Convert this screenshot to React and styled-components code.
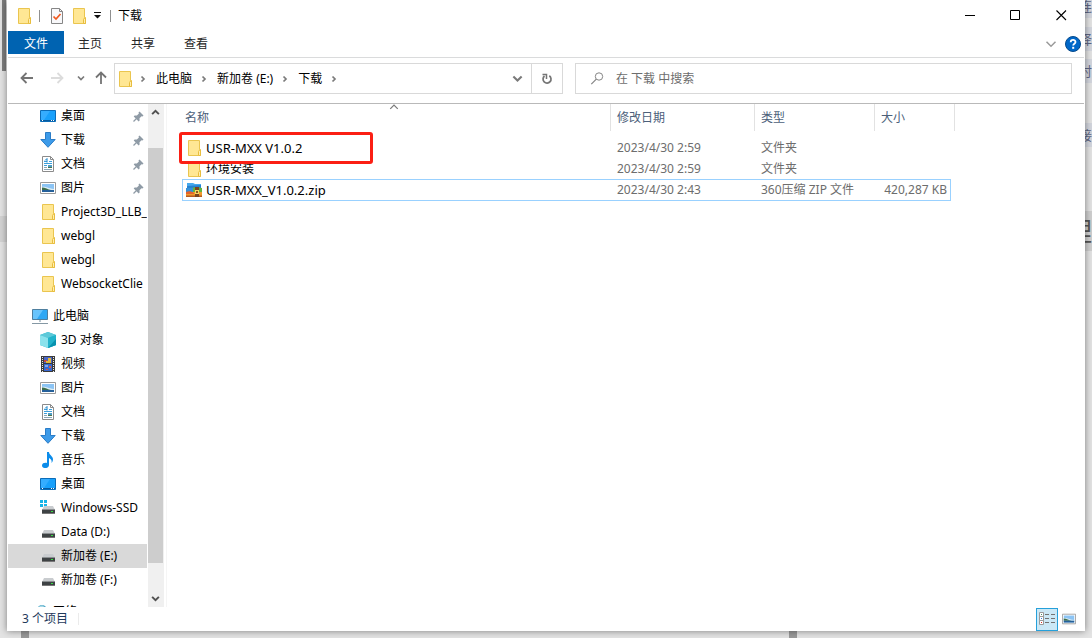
import React from "react";
import styled, { createGlobalStyle } from "styled-components";

const GlobalStyle = createGlobalStyle`
  *, *::before, *::after { box-sizing: border-box; }
  body {
    margin: 0;
    background: #dfdfdf;
    color: #000;
    font-family: "Noto Sans", "Noto Sans CJK SC", sans-serif;
    font-size: 12px;
    line-height: 16px;
  }
  button, input { font: inherit; color: inherit; }
`;

/* ---------- desktop behind the window ---------- */

const Desktop = styled.div`
  position: relative;
  display: flex;
  height: 100vh;
  padding: 0 7px 7px;
  overflow: hidden;
  background: #e3e3e3;
`;

const BackBar = styled.div`
  position: absolute;
  left: ${(p) => p.$left};
  top: ${(p) => p.$top};
  width: ${(p) => p.$w}px;
  height: ${(p) => p.$h}px;
  background: ${(p) => p.$color};
`;

const BackText = styled.div`
  position: absolute;
  right: 0;
  top: ${(p) => p.$top}px;
  width: 8px;
  height: ${(p) => p.$h}px;
  display: flex;
  align-items: center;
  justify-content: flex-end;
  overflow: hidden;
  background: ${(p) => p.$bg};
  color: ${(p) => p.$color};
  font-size: ${(p) => p.$size}px;
  line-height: ${(p) => p.$h}px;
`;

const Window = styled.main`
  position: relative;
  flex: 1;
  min-width: 0;
  display: flex;
  flex-direction: column;
  padding: 0 1px;
  background: #fff;
  box-shadow: 0 0 7px rgba(0, 0, 0, 0.45);
`;

/* ---------- shared ---------- */

const IconButton = styled.button`
  display: flex;
  align-items: center;
  justify-content: center;
  flex: none;
  width: ${(p) => p.$w}px;
  height: ${(p) => p.$h || 30}px;
  padding: 0;
  border: 0;
  background: none;
  color: ${(p) => p.$color || "#000"};
`;

const Svg = styled.svg`
  display: block;
  flex: none;
`;

/* ---------- title bar ---------- */

const TitleBar = styled.header`
  display: flex;
  align-items: center;
  height: 31px;
  padding-left: 10px;
`;

const QuickTools = styled.div`
  display: flex;
  align-items: center;
  gap: 7px;
`;

const Divider = styled.span`
  width: 1px;
  height: 12px;
  margin-left: 1px;
  background: #909090;
`;

const Title = styled.h1`
  margin: 0 0 0 7px;
  font-size: 12px;
  font-weight: 400;
`;

const WindowControls = styled.div`
  display: flex;
  margin-left: auto;
`;

/* ---------- ribbon ---------- */

const Ribbon = styled.nav`
  display: flex;
  align-items: flex-start;
  gap: 1px;
  height: 27px;
  border-bottom: 1px solid #dadbdc;
`;

const Tab = styled.button`
  height: 23px;
  padding: 2px ${(p) => (p.$active ? 16 : 14)}px 0;
  margin-right: ${(p) => (p.$active ? -1 : 0)}px;
  border: 0;
  background: ${(p) => (p.$active ? "#0063b1" : "transparent")};
  color: ${(p) => (p.$active ? "#fff" : "#262626")};
`;

const RibbonTools = styled.div`
  display: flex;
  align-items: center;
  margin-left: auto;
  height: 26px;
`;

/* ---------- address row ---------- */

const AddressRow = styled.div`
  display: flex;
  align-items: flex-start;
  height: 46px;
  padding: 5px 12px 0 6px;
  border-bottom: 1px solid #b9b9b9;
`;

const AddressFields = styled.div`
  flex: 1;
  min-width: 0;
  display: grid;
  grid-template-columns: minmax(0, 449fr) minmax(0, 497fr);
  gap: 12px;
`;

const AddressBox = styled.div`
  display: flex;
  align-items: center;
  height: 31px;
  padding-left: 4px;
  border: 1px solid #d9d9d9;
`;

const Crumbs = styled.ol`
  display: flex;
  align-items: center;
  flex: 1;
  min-width: 0;
  margin: 0;
  padding: 0 0 0 7px;
  list-style: none;
`;

const Crumb = styled.li`
  display: flex;
  align-items: center;
  gap: 8px;
  margin-right: 9px;
  white-space: nowrap;
`;

const CrumbLink = styled.a`
  color: #000;
  text-decoration: none;
`;

const RefreshCell = styled.div`
  border-left: 1px solid #d9d9d9;
`;

const SearchBox = styled.label`
  display: flex;
  align-items: center;
  gap: 12px;
  height: 31px;
  padding: 0 14px;
  border: 1px solid #d9d9d9;
`;

const SearchInput = styled.input`
  flex: 1;
  min-width: 0;
  padding: 0;
  border: 0;
  outline: 0;
  background: none;
  &::placeholder { color: #6d6d6d; opacity: 1; }
`;

/* ---------- body ---------- */

const Body = styled.div`
  flex: 1;
  min-height: 0;
  display: flex;
`;

const Sidebar = styled.nav`
  flex: none;
  width: 139px;
  overflow: hidden;
`;

const Tree = styled.ul`
  margin: 0 0 8px;
  padding: 0;
  list-style: none;
`;

const TreeLink = styled.a`
  display: flex;
  align-items: center;
  gap: 5px;
  height: 24px;
  padding-left: ${(p) => (p.$root ? 24 : 32)}px;
  background: ${(p) => (p.$selected ? "#d9d9d9" : "transparent")};
  color: #000;
  text-decoration: none;
  white-space: nowrap;
`;

const PinSlot = styled.span`
  margin-left: auto;
  padding-right: 3px;
`;

const ScrollRail = styled.div`
  flex: none;
  width: 16px;
  margin-left: 1px;
  display: flex;
  flex-direction: column;
  background: #f0f0f0;
`;

const ScrollTrack = styled.div`
  flex: 1;
  display: flex;
  flex-direction: column;
  padding-right: 1px;
`;

const Spacer = styled.div`
  flex: 27;
`;

const Thumb = styled.div`
  flex: 415;
  background: #cdcdcd;
`;

const Files = styled.section`
  flex: 1;
  min-width: 0;
  margin-left: 2px;
  padding-left: 15px;
  border-left: 1px solid #f5f5f5;
`;

const Table = styled.table`
  width: 773px;
  table-layout: fixed;
  border-collapse: separate;
  border-spacing: 0;
`;

const HeadCell = styled.th`
  position: relative;
  height: 27px;
  padding: 0 0 0 ${(p) => (p.$first ? 3 : 6)}px;
  border-right: 1px solid #e2e2e2;
  color: #4c607a;
  font-weight: 400;
  text-align: left;
`;

const SortMark = styled.span`
  position: absolute;
  top: -2px;
  left: 50%;
  margin-left: -7px;
`;

const HeadGap = styled.tr`
  height: 6px;
`;

const FileRow = styled.tr`
  position: relative;
  height: 21px;
  &::after {
    content: "";
    position: absolute;
    inset: 0 4px -1px 0;
    border: 1px solid #99d1ff;
    display: ${(p) => (p.$focused ? "block" : "none")};
  }
`;

const Cell = styled.td`
  position: relative;
  padding: 0 8px 0 6px;
  color: #6d6d6d;
  text-align: ${(p) => p.$align || "left"};
  white-space: nowrap;
`;

const NameCell = styled(Cell)`
  padding: 0 0 0 4px;
  color: #000;
`;

const FileName = styled.span`
  display: flex;
  align-items: center;
  gap: 4px;
  height: 20px;
  font-size: ${(p) => (p.$latin ? 13 : 12)}px;
`;

const IconSlot = styled.span`
  display: flex;
  justify-content: center;
  flex: none;
  width: 16px;
`;

const Highlight = styled.span`
  position: absolute;
  z-index: 2;
  top: -5px;
  left: -3px;
  width: 194px;
  height: 32px;
  border: 3px solid #fb1f14;
  border-radius: 3px;
`;

const StatusBar = styled.footer`
  display: flex;
  align-items: center;
  height: 24px;
  padding: 0 4px 0 14px;
  color: #1e395b;
`;

const StatusDivider = styled.span`
  width: 1px;
  height: 12px;
  margin-left: 10px;
  background: #ebebeb;
`;

const Views = styled.div`
  display: flex;
  align-items: center;
  margin-left: auto;
`;

const ViewButton = styled.button`
  display: flex;
  align-items: center;
  justify-content: center;
  width: 22px;
  height: 23px;
  padding: 0;
  border: 1px solid ${(p) => (p.$on ? "#26a0da" : "transparent")};
  background: ${(p) => (p.$on ? "#cbe8f6" : "transparent")};
`;

/* ---------- icons ---------- */

const FolderIcon = () => (
  <Svg width="13" height="16" viewBox="0 0 13 16" aria-hidden="true">
    <path d="M.5.5h11v9h1v6H.5z" fill="#ffe794" stroke="#eac54f" />
    <path d="M10.5 15.5v-4l1-1.5h1v5.5z" fill="#ffeeb0" stroke="#e8bd3e" />
  </Svg>
);

const CheckDocIcon = () => (
  <Svg width="12" height="16" viewBox="0 0 12 16" aria-hidden="true">
    <path d="M.5.5h8l3 3v12H.5z" fill="#f8f8fa" stroke="#868686" />
    <path d="M8.500.5v3h3" fill="none" stroke="#868686" />
    <path d="M2.500 8.500l2.500 2.500 4.500-5" fill="none" stroke="#f0581e" strokeWidth="1.700" />
  </Svg>
);

const MenuMark = () => (
  <Svg width="7" height="7" viewBox="0 0 7 7" aria-hidden="true">
    <path d="M0 0h7v1H0zM0 3h7L3.500 6.500z" fill="#111" />
  </Svg>
);

const Chevron = ({ dir = "down", size = 8, color = "#7a7a7a", width = 1.7 }) => {
  const d = { down: "M1 2.500l3 3 3-3", up: "M1 5.500l3-3 3 3", right: "M2.500 1.500L5 4 2.500 6.500" }[dir];
  return (
    <Svg width={size} height={size} viewBox="0 0 8 8" aria-hidden="true">
      <path d={d} fill="none" stroke={color} strokeWidth={width} />
    </Svg>
  );
};

const Arrow = ({ turn = 0, color = "#747474" }) => (
  <Svg width="14" height="14" viewBox="0 0 14 14" aria-hidden="true">
    <path d="M13 7H2M6.500 2L1.500 7l5 5" fill="none" stroke={color} strokeWidth="1.800" transform={`rotate(${turn} 7 7)`} />
  </Svg>
);

const RefreshIcon = () => (
  <Svg width="12" height="12" viewBox="0 0 12 12" aria-hidden="true">
    <path d="M8.300 2.800A4 4 0 1 1 3.500 3" fill="none" stroke="#757575" strokeWidth="1.700" />
    <path d="M1.500 1.500h4v4.500" fill="none" stroke="#757575" strokeWidth="1.500" />
  </Svg>
);

const SearchIcon = () => (
  <Svg width="14" height="14" viewBox="0 0 14 14" aria-hidden="true">
    <circle cx="9" cy="4.500" r="3.700" fill="none" stroke="#858585" />
    <path d="M6.300 7.200L1.300 12.200" stroke="#858585" strokeWidth="1.200" />
  </Svg>
);

const HelpIcon = () => (
  <Svg width="16" height="16" viewBox="0 0 16 16" aria-hidden="true">
    <circle cx="8" cy="8" r="7.500" fill="#0067c8" stroke="#064a8c" />
    <path d="M5.700 6.200c0-3 4.800-3 4.800-.2 0 1.700-2.300 1.700-2.300 3.500" fill="none" stroke="#fff" strokeWidth="1.800" />
    <rect x="7.200" y="10.800" width="2" height="2" fill="#fff" />
  </Svg>
);

const MinIcon = () => (
  <Svg width="11" height="11" viewBox="0 0 11 11"><path d="M0 5.500h10" stroke="#000" /></Svg>
);
const MaxIcon = () => (
  <Svg width="11" height="11" viewBox="0 0 11 11"><path d="M.5.5h9v9h-9z" fill="none" stroke="#000" /></Svg>
);
const CloseIcon = () => (
  <Svg width="11" height="11" viewBox="0 0 11 11"><path d="M.5.5l9.500 9.500M10 .5L.5 10" stroke="#000" strokeWidth="1.100" /></Svg>
);

const DesktopIcon = () => (
  <Svg width="16" height="16" viewBox="0 0 16 16">
    <path d="M.5 2.500h15v11H.5z" fill="#18a0fb" stroke="#0b6cb8" />
    <path d="M1 12h14v1H1z" fill="#075a9e" />
    <path d="M2 12h1v1H2zM11 12h1v1h-1zM13 12h1v1h-1z" fill="#fff" />
    <path d="M1 3h9L4 12H1z" fill="#35adff" />
  </Svg>
);

const DownloadIcon = () => (
  <Svg width="16" height="16" viewBox="0 0 16 16">
    <path d="M5.500.5h5v7h4.700L8 15.300.8 7.500h4.700z" fill="#3d9be9" stroke="#2a7cc7" />
  </Svg>
);

const DocIcon = () => (
  <Svg width="16" height="16" viewBox="0 0 16 16">
    <path d="M2.500.5h8l3 3v12h-11z" fill="#fff" stroke="#8b8b8b" />
    <path d="M10.500.5v3h3" fill="none" stroke="#8b8b8b" />
    <path d="M4 5.500h3M9 5.500h3M4 7.500h8M4 9.500h3" stroke="#3b9fdb" />
    <path d="M5 4.500l2-2v4" fill="none" stroke="#1683c9" />
    <path d="M8 9h4v2H8z" fill="#4e9cc4" />
    <path d="M4 11.500h3M4 13.500h8" stroke="#8ba7b8" />
    <path d="M8 11h4v1H8z" fill="#48724a" />
  </Svg>
);

const PictureIcon = ({ w = 16, h = 16 }) => (
  <Svg width={w} height={h} viewBox="0 0 16 16">
    <path d="M.5 2.500h15v11H.5z" fill="#fff" stroke="#9a9a9a" />
    <path d="M2 4h12v8H2z" fill="#8cc4f4" />
    <path d="M2 7c3-1 5 1 12 2v1H2z" fill="#dcecf5" />
    <path d="M2 7.500c3 0 6 2 9 2.500H2z" fill="#3c6d4c" />
    <path d="M2 10h12v2H2z" fill="#25609a" />
  </Svg>
);

const ComputerIcon = () => (
  <Svg width="16" height="16" viewBox="0 0 16 16">
    <path d="M.5 1.500h15v10H.5z" fill="#2fa8f5" stroke="#4f7f9f" />
    <path d="M1 2h10L5 11H1z" fill="#68c4fc" />
    <path d="M7 12h2v2H7z" fill="#b8c6ce" />
    <path d="M0 15.500h16" stroke="#8598a4" />
  </Svg>
);

const CubeIcon = () => (
  <Svg width="16" height="16" viewBox="0 0 16 16">
    <path d="M8 0l8 3v10l-8 3-8-3V3z" fill="#29b7cf" />
    <path d="M8 0l8 3-8 3-8-3z" fill="#5cc9d8" />
    <path d="M8 6l8-3v10l-8 3z" fill="#22b3cb" />
    <path d="M0 3l8 3v10l-8-3z" fill="#8be2ec" />
    <path d="M16 7v6l-8 3z" fill="#0892ae" />
  </Svg>
);

const VideoIcon = () => (
  <Svg width="16" height="16" viewBox="0 0 16 16">
    <path d="M1 0h14v16H1z" fill="#3b3b3b" />
    <path d="M2.500 1v15M13.500 1v15" stroke="#e9e9e9" strokeWidth="1" strokeDasharray="1 1" />
    <path d="M4 1h8v6H4z" fill="#4a67c8" />
    <path d="M4 8h8v7H4z" fill="#3869d0" />
    <path d="M4 4h3v2H4z" fill="#c24444" />
    <path d="M8 2h3v3H8zM6 5h5v2H6z" fill="#e4b93b" />
    <path d="M5 9h3v2H5z" fill="#82a6eb" />
    <path d="M6 13h2v1H6zM9 10h2v2H9z" fill="#d95b3a" />
  </Svg>
);

const MusicIcon = () => (
  <Svg width="16" height="16" viewBox="0 0 16 16">
    <path d="M7 0h2c0 3 4 4 4 7.500 0 1.500-1 3-1.500 3.500C12 8 11 7 9 6v7c0 4-7 4-7 .5C2 11 5 10.500 7 11z" fill="#0c8cea" />
  </Svg>
);

const DriveIcon = ({ windows }) => (
  <Svg width="16" height="16" viewBox="0 0 16 16">
    {windows && <path d="M0 0h3v3H0zM4 0h3v3H4zM0 4h3v3H0zM4 4h3v3H4z" fill="#16b4e8" />}
    <path d="M4 6h9l2 4H2z" fill="#c9cccf" />
    <path d="M2 9h13v5H2z" fill="#3e4244" />
    <path d="M2 9h13v1H2z" fill="#8b8f91" />
    <path d="M2 13.500h13" stroke="#777" />
    <path d="M11 11h2v1h-2z" fill="#37e043" />
  </Svg>
);

const NetworkIcon = () => (
  <Svg width="16" height="16" viewBox="0 0 16 16">
    <circle cx="10" cy="6" r="5" fill="#55aac9" />
    <path d="M6 4c2-3 5-3 6-2l-2 3z" fill="#a8d8e6" />
    <path d="M1 7h9v6H1z" fill="#2f9be0" />
  </Svg>
);

const PinIcon = () => (
  <Svg width="11" height="11" viewBox="0 0 11 11" aria-hidden="true">
    <path d="M6.500.5l4 4-1 1-1-.3-2 2 .1 2.300-.9.9-5-5 .9-.9 2.300.1 2-2-.4-1.100z" fill="#8f9ba6" />
    <path d="M3.500 7.500L.5 10.500" stroke="#8f9ba6" strokeWidth="1.300" />
  </Svg>
);

const ArchiveIcon = () => (
  <Svg width="16" height="14" viewBox="0 0 16 14">
    <path d="M1 0h6l2 1h6v5H1z" fill="#45a8ed" />
    <path d="M1 3l14-1v4H1z" fill="#2680d0" />
    <path d="M0 6c5-1 10-3 16-1v4H0z" fill="#63b440" />
    <path d="M0 5h7v4H0z" fill="#3490d8" />
    <path d="M0 9h16v4H0z" fill="#f19a2c" />
    <path d="M0 9c3-1 5-1 8 1v1H0z" fill="#e4632d" />
    <path d="M0 12.500h16V14H0z" fill="#b65a20" />
    <path d="M9 4h4v10H9z" fill="#7a4520" />
    <path d="M9 7h4v4H9z" fill="#f6d564" />
    <path d="M10 8h2v2h-2z" fill="#8a5521" />
  </Svg>
);

const DetailsIcon = () => (
  <Svg width="16" height="14" viewBox="0 0 16 14">
    <path d="M.5.5h4v4h-4zM.5 4.500h4v4h-4zM.5 8.500h4v4h-4z" fill="#fff" stroke="#9a9a9a" />
    <path d="M2 2h1v1H2z" fill="#4a8f68" />
    <path d="M2 6h1v1H2z" fill="#2f7fe0" />
    <path d="M2 10h1v1H2z" fill="#d92c1d" />
    <path d="M6 2.500h4M12 2.500h4M6 6.500h4M12 6.500h4M6 10.500h4M12 10.500h4" stroke="#737373" />
  </Svg>
);

/* ---------- data ---------- */

const quickAccess = [
  { label: "桌面", icon: DesktopIcon, pinned: true },
  { label: "下载", icon: DownloadIcon, pinned: true },
  { label: "文档", icon: DocIcon, pinned: true },
  { label: "图片", icon: PictureIcon, pinned: true },
  { label: "Project3D_LLB_", icon: FolderIcon },
  { label: "webgl", icon: FolderIcon },
  { label: "webgl", icon: FolderIcon },
  { label: "WebsocketClie", icon: FolderIcon },
];

const thisPc = [
  { label: "此电脑", icon: ComputerIcon, root: true },
  { label: "3D 对象", icon: CubeIcon },
  { label: "视频", icon: VideoIcon },
  { label: "图片", icon: PictureIcon },
  { label: "文档", icon: DocIcon },
  { label: "下载", icon: DownloadIcon },
  { label: "音乐", icon: MusicIcon },
  { label: "桌面", icon: DesktopIcon },
  { label: "Windows-SSD", icon: () => <DriveIcon windows /> },
  { label: "Data (D:)", icon: DriveIcon },
  { label: "新加卷 (E:)", icon: DriveIcon, selected: true },
  { label: "新加卷 (F:)", icon: DriveIcon },
];

const network = [{ label: "网络", icon: NetworkIcon, root: true }];

const files = [
  { name: "USR-MXX V1.0.2", latin: true, date: "2023/4/30 2:59", type: "文件夹", size: "", icon: FolderIcon, marked: true },
  { name: "环境安装", date: "2023/4/30 2:59", type: "文件夹", size: "", icon: FolderIcon },
  { name: "USR-MXX_V1.0.2.zip", latin: true, date: "2023/4/30 2:43", type: "360压缩 ZIP 文件", size: "420,287 KB", icon: ArchiveIcon, focused: true },
];

const TreeGroup = ({ items }) => (
  <Tree>
    {items.map(({ label, icon: Icon, pinned, root, selected }, i) => (
      <li key={i}>
        <TreeLink href="#" $root={root} $selected={selected}>
          <IconSlot><Icon /></IconSlot>
          <span>{label}</span>
          {pinned && <PinSlot><PinIcon /></PinSlot>}
        </TreeLink>
      </li>
    ))}
  </Tree>
);

export default function App() {
  return (
    <Desktop>
      <GlobalStyle />
      <BackBar $left="2px" $top="0" $w={4} $h={71} $color="#7d7d7d" />
      <BackBar $left="0" $top="216px" $w={7} $h={26} $color="#d3d3d3" />
      <BackBar $left="21px" $top="calc(100% - 7px)" $w={8} $h={7} $color="#999" />
      <BackBar $left="789px" $top="calc(100% - 7px)" $w={8} $h={7} $color="#999" />
      <BackText $top={-6} $h={24} $bg="#d3d6de" $color="#5f6684" $size={13}>连</BackText>
      <BackText $top={27} $h={24} $bg="#d3d6de" $color="#5f6684" $size={13}>择</BackText>
      <BackText $top={59} $h={24} $bg="#d3d6de" $color="#5f6684" $size={13}>时</BackText>
      <BackText $top={123} $h={24} $bg="#d3d6de" $color="#5f6684" $size={13}>接</BackText>
      <BackText $top={211} $h={40} $bg="#cfcfcf" $color="#555" $size={26}>理</BackText>

      <Window>
        <TitleBar>
          <QuickTools>
            <FolderIcon />
            <Divider />
            <IconButton $w={19} aria-label="属性"><CheckDocIcon /></IconButton>
            <IconButton $w={13} aria-label="新建文件夹"><FolderIcon /></IconButton>
            <IconButton $w={9} aria-label="自定义快速访问工具栏"><MenuMark /></IconButton>
            <Divider />
          </QuickTools>
          <Title>下载</Title>
          <WindowControls>
            <IconButton $w={46} aria-label="最小化"><MinIcon /></IconButton>
            <IconButton $w={45} aria-label="最大化"><MaxIcon /></IconButton>
            <IconButton $w={46} aria-label="关闭"><CloseIcon /></IconButton>
          </WindowControls>
        </TitleBar>

        <Ribbon>
          <Tab $active>文件</Tab>
          <Tab>主页</Tab>
          <Tab>共享</Tab>
          <Tab>查看</Tab>
          <RibbonTools>
            <IconButton $w={22} $h={24} aria-label="展开功能区"><Chevron size={12} color="#9a9a9a" width={1} /></IconButton>
            <IconButton $w={22} $h={24} aria-label="帮助"><HelpIcon /></IconButton>
          </RibbonTools>
        </Ribbon>

        <AddressRow>
          <IconButton $w={26} aria-label="返回"><Arrow /></IconButton>
          <IconButton $w={34} aria-label="前进"><Arrow turn={180} color="#dcdcdc" /></IconButton>
          <IconButton $w={14} aria-label="最近浏览的位置"><Chevron /></IconButton>
          <IconButton $w={26} aria-label="上移"><Arrow turn={90} /></IconButton>
          <AddressFields>
            <AddressBox>
              <FolderIcon />
              <Crumbs>
                <Crumb><Chevron dir="right" /></Crumb>
                {["此电脑", "新加卷 (E:)", "下载"].map((c) => (
                  <Crumb key={c}><CrumbLink href="#">{c}</CrumbLink><Chevron dir="right" /></Crumb>
                ))}
              </Crumbs>
              <IconButton $w={28} $h={29} aria-label="以前的位置"><Chevron size={11} width={1.5} /></IconButton>
              <RefreshCell>
                <IconButton $w={30} $h={29} aria-label="刷新"><RefreshIcon /></IconButton>
              </RefreshCell>
            </AddressBox>
            <SearchBox>
              <SearchIcon />
              <SearchInput type="text" aria-label="搜索" placeholder="在 下载 中搜索" />
            </SearchBox>
          </AddressFields>
        </AddressRow>

        <Body>
          <Sidebar>
            <TreeGroup items={quickAccess} />
            <TreeGroup items={thisPc} />
            <TreeGroup items={network} />
          </Sidebar>
          <ScrollRail>
            <IconButton $w={15} $h={17} aria-label="向上滚动"><Chevron dir="up" size={9} color="#505050" /></IconButton>
            <ScrollTrack><Spacer /><Thumb /><Spacer /></ScrollTrack>
            <IconButton $w={15} $h={17} aria-label="向下滚动"><Chevron size={9} color="#505050" /></IconButton>
          </ScrollRail>
          <Files>
            <Table>
              <colgroup>
                <col width="429" /><col width="144" /><col width="120" /><col width="80" />
              </colgroup>
              <thead>
                <tr>
                  <HeadCell $first>
                    名称
                    <SortMark><Chevron dir="up" size={10} width={1} /></SortMark>
                  </HeadCell>
                  <HeadCell>修改日期</HeadCell>
                  <HeadCell>类型</HeadCell>
                  <HeadCell>大小</HeadCell>
                </tr>
              </thead>
              <tbody>
                <HeadGap />
                {files.map(({ icon: Icon, ...f }) => (
                  <FileRow key={f.name} $focused={f.focused}>
                    <NameCell>
                      <FileName $latin={f.latin}><IconSlot><Icon /></IconSlot>{f.name}</FileName>
                      {f.marked && <Highlight />}
                    </NameCell>
                    <Cell>{f.date}</Cell>
                    <Cell>{f.type}</Cell>
                    <Cell $align="right">{f.size}</Cell>
                  </FileRow>
                ))}
              </tbody>
            </Table>
          </Files>
        </Body>

        <StatusBar>
          <span>3 个项目</span>
          <StatusDivider />
          <Views>
            <ViewButton $on aria-label="详细信息"><DetailsIcon /></ViewButton>
            <ViewButton aria-label="大缩略图"><PictureIcon w={14} h={14} /></ViewButton>
          </Views>
        </StatusBar>
      </Window>
    </Desktop>
  );
}
